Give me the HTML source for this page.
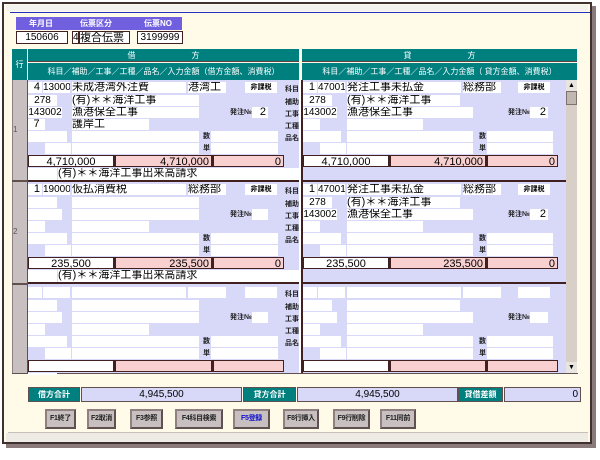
<!DOCTYPE html>
<html><head><meta charset="utf-8"><style>
*{margin:0;padding:0;box-sizing:border-box}
body{width:600px;height:460px;background:#fff;position:relative;overflow:hidden;font-family:"Liberation Sans","Noto Sans CJK JP",sans-serif;font-size:11px;color:#000}
.a{position:absolute}
.w{position:absolute;background:#fff;height:11px;line-height:11px;font-size:11px;white-space:nowrap;overflow:hidden}
.r{text-align:right;padding-right:2px}
.c{text-align:center}
.lb{position:absolute;font-size:7px;font-weight:bold;line-height:8px;color:#222;white-space:nowrap}
.teal{position:absolute;background:#007f7f;color:#fff;text-align:center;white-space:nowrap}
.pk{position:absolute;background:#f8d0d0;height:12px;line-height:12px;text-align:right;padding-right:2px;border:1px solid #402020;border-left:2px solid #402020}
.wb{position:absolute;background:#fff;height:12px;line-height:12px;border:1px solid #402020;text-align:center;white-space:nowrap;overflow:hidden}
.lav{position:absolute;background:#d8d8f8}
.btn{position:absolute;top:409px;height:20px;background:#c8c0c0;border:2px solid #605050;border-top-color:#908080;border-left-color:#908080;font-size:7px;line-height:16px;text-align:center;font-weight:bold;color:#222;white-space:nowrap;overflow:hidden;letter-spacing:-0.3px}
.tot{position:absolute;top:387px;height:15px;line-height:13px;font-size:10px;border:1px solid #605050}
</style></head><body>
<div class="a" style="left:6px;top:6px;width:590px;height:442px;background:#8a7a7a"></div>
<div class="a" style="left:2px;top:2px;width:590px;height:442px;background:#fffbe8;border:2px solid #403030"></div>
<div class="a" style="left:6px;top:5px;width:582px;height:6px;background:#f4f2ee"></div>
<div class="a" style="left:10px;top:12px;width:580px;height:1px;background:#2030c0"></div>
<div class="a" style="left:6px;top:433px;width:582px;height:9px;background:#eeeae4"></div>
<div class="a" style="left:8px;top:432px;width:580px;height:1px;background:#c8c0b8"></div>

<div class="a" style="left:16px;top:17px;width:166px;height:13px;background:#7060e0;color:#fff;font-size:8px;line-height:13px;font-weight:bold">
<span class="a" style="left:13px">年月日</span><span class="a" style="left:64px">伝票区分</span><span class="a" style="left:128px">伝票NO</span></div>
<div class="wb" style="left:16px;top:31px;width:52px;height:13px;font-size:10px">150606</div>
<div class="wb" style="left:72px;top:31px;width:7px;height:13px;font-size:10px">4</div>
<div class="wb" style="left:79px;top:31px;width:51px;height:13px;text-align:left">複合伝票</div>
<div class="wb" style="left:137px;top:31px;width:46px;height:13px;font-size:10px">3199999</div>

<div class="teal" style="left:12px;top:49px;width:15px;height:31px;line-height:31px;font-size:8px">行</div>
<div class="teal" style="left:28px;top:49px;width:271px;height:13px;line-height:13px;font-size:8px;border-bottom:1px solid #604040">借　　　　　　　方</div>
<div class="teal" style="left:28px;top:63px;width:271px;height:17px;line-height:17px;font-size:8px">科目／補助／工事／工種／品名／入力金額（借方金額、消費税）</div>
<div class="teal" style="left:302px;top:49px;width:275px;height:13px;line-height:13px;font-size:8px;border-bottom:1px solid #604040">貸　　　　　　　方</div>
<div class="teal" style="left:302px;top:63px;width:275px;height:17px;line-height:17px;font-size:8px">科目／補助／工事／工種／品名／入力金額（ 貸方金額、消費税）</div>

<div class="a" style="left:12px;top:80px;width:16px;height:294px;background:#c8c0c0;border-right:1px solid #605050;border-left:1px solid #908080"></div>
<div class="lav" style="left:28px;top:80px;width:271px;height:294px"></div>
<div class="a" style="left:299px;top:80px;width:3px;height:294px;background:#fff"></div>
<div class="a" style="left:301px;top:80px;width:2px;height:294px;background:#402020"></div>
<div class="lav" style="left:303px;top:80px;width:263px;height:294px"></div>
<div class="a" style="left:566px;top:80px;width:11px;height:294px;background:#d8d0c8"></div>
<div class="a" style="left:566px;top:80px;width:11px;height:11px;background:#e8e4e0;font-size:7px;text-align:center;line-height:11px">▲</div>
<div class="a" style="left:566px;top:91px;width:11px;height:14px;background:#c0b8b0;border:1px solid #807070"></div>
<div class="a" style="left:566px;top:362px;width:11px;height:11px;background:#e8e4e0;font-size:7px;text-align:center;line-height:11px">▼</div>
<div class="a" style="left:12px;top:373px;width:566px;height:1px;background:#605050"></div>

<div class="a" style="left:13px;top:125px;font-size:8px;color:#555">1</div>
<div class="a" style="left:13px;top:227px;font-size:8px;color:#555">2</div>
<div class="a" style="left:12px;top:180px;width:16px;height:2px;background:#605050"></div>
<div class="a" style="left:12px;top:283px;width:16px;height:2px;background:#605050"></div>

<div class="a" style="left:28px;top:80px;width:271px;height:102px">
<div class="w r" style="left:0;top:2px;width:14px">4</div><div class="w r" style="left:15px;top:2px;width:27px;font-size:10px">13000</div><div class="w" style="left:44px;top:2px;width:114px">未成港湾外注費</div><div class="w" style="left:160px;top:2px;width:38px">港湾工</div><div class="w c" style="left:217px;top:2px;width:32px;font-size:7px;font-weight:bold">非課税</div>
<div class="w c" style="left:0;top:15px;width:29px;font-size:10px">278</div><div class="w" style="left:44px;top:15px;width:127px">(有)＊＊海洋工事</div>
<div class="w c" style="left:0;top:27px;width:34px;font-size:10px">143002</div><div class="w" style="left:44px;top:27px;width:127px">漁港保全工事</div><span class="lb" style="left:202px;top:29px">発注№</span><div class="w r" style="left:224px;top:27px;width:16px">2</div>
<div class="w c" style="left:0;top:39px;width:17px">7</div><div class="w" style="left:44px;top:39px;width:77px">護岸工</div>
<div class="w" style="left:0;top:51px;width:39px"></div><div class="w" style="left:44px;top:51px;width:127px"></div><span class="lb" style="left:175px;top:53px">数</span><div class="w" style="left:183px;top:51px;width:67px"></div>
<div class="w" style="left:17px;top:63px;width:26px"></div><div class="w" style="left:44px;top:63px;width:127px"></div><span class="lb" style="left:175px;top:65px">単</span><div class="w" style="left:183px;top:63px;width:67px"></div>
<div class="wb" style="left:0;top:75px;width:86px">4,710,000</div><div class="pk" style="left:86px;top:75px;width:98px">4,710,000</div><div class="pk" style="left:184px;top:75px;width:72px">0</div>
<div class="w" style="left:0;top:88px;width:29px;height:12px"></div><div class="w" style="left:30px;top:88px;width:241px;height:12px">(有)＊＊海洋工事出来高請求</div>
<span class="lb" style="left:257px;top:6px">科目</span><span class="lb" style="left:257px;top:19px">補助</span><span class="lb" style="left:257px;top:31px">工事</span><span class="lb" style="left:257px;top:43px">工種</span><span class="lb" style="left:257px;top:55px">品名</span>
<div class="a" style="left:0;top:100px;width:271px;height:2px;background:#402020"></div>
</div>
<div class="a" style="left:303px;top:80px;width:263px;height:102px">
<div class="w r" style="left:0;top:2px;width:14px">1</div><div class="w r" style="left:15px;top:2px;width:27px;font-size:10px">47001</div><div class="w" style="left:44px;top:2px;width:114px">発注工事未払金</div><div class="w" style="left:160px;top:2px;width:38px">総務部</div><div class="w c" style="left:215px;top:2px;width:32px;font-size:7px;font-weight:bold">非課税</div>
<div class="w c" style="left:0;top:15px;width:29px;font-size:10px">278</div><div class="w" style="left:44px;top:15px;width:113px">(有)＊＊海洋工事</div>
<div class="w c" style="left:0;top:27px;width:34px;font-size:10px">143002</div><div class="w" style="left:44px;top:27px;width:126px">漁港保全工事</div><span class="lb" style="left:205px;top:29px">発注№</span><div class="w r" style="left:227px;top:27px;width:18px">2</div>
<div class="w" style="left:0;top:39px;width:17px"></div><div class="w" style="left:44px;top:39px;width:76px"></div>
<div class="w" style="left:0;top:51px;width:38px"></div><div class="w" style="left:44px;top:51px;width:126px"></div><span class="lb" style="left:176px;top:53px">数</span><div class="w" style="left:184px;top:51px;width:66px"></div>
<div class="w" style="left:17px;top:63px;width:26px"></div><div class="w" style="left:44px;top:63px;width:126px"></div><span class="lb" style="left:176px;top:65px">単</span><div class="w" style="left:184px;top:63px;width:66px"></div>
<div class="wb" style="left:0;top:75px;width:86px">4,710,000</div><div class="pk" style="left:86px;top:75px;width:97px">4,710,000</div><div class="pk" style="left:183px;top:75px;width:72px">0</div>
<div class="a" style="left:0;top:100px;width:263px;height:2px;background:#402020"></div>
</div>

<div class="a" style="left:28px;top:182px;width:271px;height:102px">
<div class="w r" style="left:0;top:2px;width:14px">1</div><div class="w r" style="left:15px;top:2px;width:27px;font-size:10px">19000</div><div class="w" style="left:44px;top:2px;width:114px">仮払消費税</div><div class="w" style="left:160px;top:2px;width:38px">総務部</div><div class="w c" style="left:217px;top:2px;width:32px;font-size:7px;font-weight:bold">非課税</div>
<div class="w" style="left:0;top:15px;width:29px"></div><div class="w" style="left:44px;top:15px;width:127px"></div>
<div class="w" style="left:0;top:27px;width:34px"></div><div class="w" style="left:44px;top:27px;width:127px"></div><span class="lb" style="left:202px;top:29px">発注№</span><div class="w" style="left:224px;top:27px;width:16px"></div>
<div class="w" style="left:0;top:39px;width:17px"></div><div class="w" style="left:44px;top:39px;width:77px"></div>
<div class="w" style="left:0;top:51px;width:39px"></div><div class="w" style="left:44px;top:51px;width:127px"></div><span class="lb" style="left:175px;top:53px">数</span><div class="w" style="left:183px;top:51px;width:67px"></div>
<div class="w" style="left:17px;top:63px;width:26px"></div><div class="w" style="left:44px;top:63px;width:127px"></div><span class="lb" style="left:175px;top:65px">単</span><div class="w" style="left:183px;top:63px;width:67px"></div>
<div class="wb" style="left:0;top:75px;width:86px">235,500</div><div class="pk" style="left:86px;top:75px;width:98px">235,500</div><div class="pk" style="left:184px;top:75px;width:72px">0</div>
<div class="w" style="left:0;top:88px;width:29px;height:12px"></div><div class="w" style="left:30px;top:88px;width:241px;height:12px">(有)＊＊海洋工事出来高請求</div>
<span class="lb" style="left:257px;top:6px">科目</span><span class="lb" style="left:257px;top:19px">補助</span><span class="lb" style="left:257px;top:31px">工事</span><span class="lb" style="left:257px;top:43px">工種</span><span class="lb" style="left:257px;top:55px">品名</span>
<div class="a" style="left:0;top:100px;width:271px;height:2px;background:#402020"></div>
</div>
<div class="a" style="left:303px;top:182px;width:263px;height:102px">
<div class="w r" style="left:0;top:2px;width:14px">1</div><div class="w r" style="left:15px;top:2px;width:27px;font-size:10px">47001</div><div class="w" style="left:44px;top:2px;width:114px">発注工事未払金</div><div class="w" style="left:160px;top:2px;width:38px">総務部</div><div class="w c" style="left:215px;top:2px;width:32px;font-size:7px;font-weight:bold">非課税</div>
<div class="w c" style="left:0;top:15px;width:29px;font-size:10px">278</div><div class="w" style="left:44px;top:15px;width:113px">(有)＊＊海洋工事</div>
<div class="w c" style="left:0;top:27px;width:34px;font-size:10px">143002</div><div class="w" style="left:44px;top:27px;width:126px">漁港保全工事</div><span class="lb" style="left:205px;top:29px">発注№</span><div class="w r" style="left:227px;top:27px;width:18px">2</div>
<div class="w" style="left:0;top:39px;width:17px"></div><div class="w" style="left:44px;top:39px;width:76px"></div>
<div class="w" style="left:0;top:51px;width:38px"></div><div class="w" style="left:44px;top:51px;width:126px"></div><span class="lb" style="left:176px;top:53px">数</span><div class="w" style="left:184px;top:51px;width:66px"></div>
<div class="w" style="left:17px;top:63px;width:26px"></div><div class="w" style="left:44px;top:63px;width:126px"></div><span class="lb" style="left:176px;top:65px">単</span><div class="w" style="left:184px;top:63px;width:66px"></div>
<div class="wb" style="left:0;top:75px;width:86px">235,500</div><div class="pk" style="left:86px;top:75px;width:97px">235,500</div><div class="pk" style="left:183px;top:75px;width:72px">0</div>
<div class="a" style="left:0;top:100px;width:263px;height:2px;background:#402020"></div>
</div>

<div class="a" style="left:28px;top:285px;width:271px;height:90px">
<div class="w" style="left:0;top:2px;width:14px"></div><div class="w" style="left:15px;top:2px;width:27px"></div><div class="w" style="left:44px;top:2px;width:114px"></div><div class="w" style="left:160px;top:2px;width:38px"></div><div class="w" style="left:217px;top:2px;width:32px"></div>
<div class="w" style="left:0;top:15px;width:29px"></div><div class="w" style="left:44px;top:15px;width:127px"></div>
<div class="w" style="left:0;top:27px;width:34px"></div><div class="w" style="left:44px;top:27px;width:127px"></div><span class="lb" style="left:202px;top:29px">発注№</span><div class="w" style="left:224px;top:27px;width:16px"></div>
<div class="w" style="left:0;top:39px;width:17px"></div><div class="w" style="left:44px;top:39px;width:77px"></div>
<div class="w" style="left:0;top:51px;width:39px"></div><div class="w" style="left:44px;top:51px;width:127px"></div><span class="lb" style="left:175px;top:53px">数</span><div class="w" style="left:183px;top:51px;width:67px"></div>
<div class="w" style="left:17px;top:63px;width:26px"></div><div class="w" style="left:44px;top:63px;width:127px"></div><span class="lb" style="left:175px;top:65px">単</span><div class="w" style="left:183px;top:63px;width:67px"></div>
<div class="wb" style="left:0;top:75px;width:86px"></div><div class="pk" style="left:86px;top:75px;width:98px"></div><div class="pk" style="left:184px;top:75px;width:72px"></div>
<div class="w" style="left:0;top:88px;width:29px;height:2px"></div>
<span class="lb" style="left:257px;top:6px">科目</span><span class="lb" style="left:257px;top:19px">補助</span><span class="lb" style="left:257px;top:31px">工事</span><span class="lb" style="left:257px;top:43px">工種</span><span class="lb" style="left:257px;top:55px">品名</span>
</div>
<div class="a" style="left:303px;top:285px;width:263px;height:88px">
<div class="w" style="left:0;top:2px;width:14px"></div><div class="w" style="left:15px;top:2px;width:27px"></div><div class="w" style="left:44px;top:2px;width:114px"></div><div class="w" style="left:160px;top:2px;width:38px"></div><div class="w" style="left:215px;top:2px;width:32px"></div>
<div class="w" style="left:0;top:15px;width:29px"></div><div class="w" style="left:44px;top:15px;width:113px"></div>
<div class="w" style="left:0;top:27px;width:34px"></div><div class="w" style="left:44px;top:27px;width:126px"></div><span class="lb" style="left:205px;top:29px">発注№</span><div class="w" style="left:227px;top:27px;width:18px"></div>
<div class="w" style="left:0;top:39px;width:17px"></div><div class="w" style="left:44px;top:39px;width:76px"></div>
<div class="w" style="left:0;top:51px;width:38px"></div><div class="w" style="left:44px;top:51px;width:126px"></div><span class="lb" style="left:176px;top:53px">数</span><div class="w" style="left:184px;top:51px;width:66px"></div>
<div class="w" style="left:17px;top:63px;width:26px"></div><div class="w" style="left:44px;top:63px;width:126px"></div><span class="lb" style="left:176px;top:65px">単</span><div class="w" style="left:184px;top:63px;width:66px"></div>
<div class="wb" style="left:0;top:75px;width:86px"></div><div class="pk" style="left:86px;top:75px;width:97px"></div><div class="pk" style="left:183px;top:75px;width:72px"></div>
</div>

<div class="tot teal" style="left:28px;width:52px;font-size:8px;font-weight:bold">借方合計</div>
<div class="tot" style="left:81px;width:161px;background:#d8d8f8;text-align:center">4,945,500</div>
<div class="tot teal" style="left:243px;width:53px;font-size:8px;font-weight:bold">貸方合計</div>
<div class="tot" style="left:297px;width:161px;background:#d8d8f8;text-align:center">4,945,500</div>
<div class="tot teal" style="left:458px;width:45px;font-size:8px;font-weight:bold">貸借差額</div>
<div class="tot" style="left:504px;width:77px;background:#d8d8f8;text-align:right;padding-right:2px">0</div>

<div class="btn" style="left:45px;width:31px">F1終了</div>
<div class="btn" style="left:87px;width:29px">F2取消</div>
<div class="btn" style="left:130px;width:33px">F3参照</div>
<div class="btn" style="left:175px;width:48px">F4科目検索</div>
<div class="btn" style="left:233px;width:37px;color:#1010d0">F5登録</div>
<div class="btn" style="left:283px;width:36px">F8行挿入</div>
<div class="btn" style="left:333px;width:37px">F9行削除</div>
<div class="btn" style="left:380px;width:36px">F11同前</div>
</body></html>
